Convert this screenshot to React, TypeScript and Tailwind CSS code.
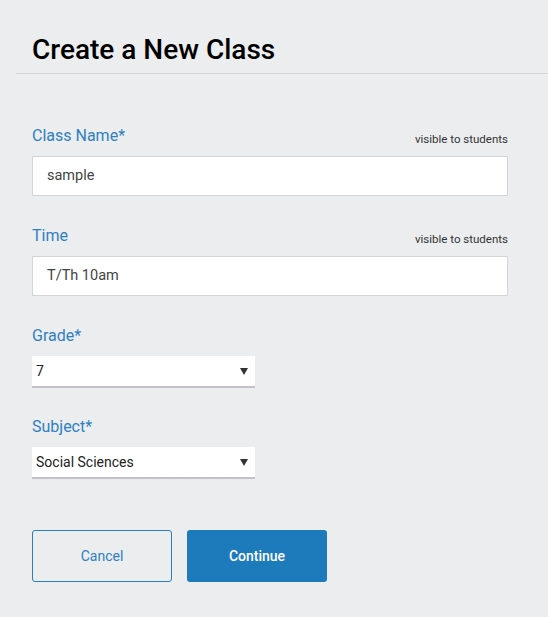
import React from "react";

function Caret() {
  return (
    <svg width="8" height="7" viewBox="0 0 8 7" className="shrink-0">
      <path d="M0 0 L8 0 L4 7 Z" fill="#333" />
    </svg>
  );
}

export default function App() {
  return (
    <div className="min-h-[617px] w-[548px] bg-[#ecedef] font-['Roboto',sans-serif]">
      <div className="pl-4">
        <div className="border-b border-[#d5d6d8] pl-4 pt-[33px] pb-[6px]">
          <h1 className="text-[28px] leading-[34px] font-medium text-black">Create a New Class</h1>
        </div>
      </div>
      <div className="pl-8 pr-10 pt-[52px]">
        <div className="flex items-end justify-between">
          <label className="block text-[16px] leading-[20px] font-normal text-[#2f80c2]">Class Name*</label>
          <span className="text-[11.5px] leading-[14px] text-[#333]">visible to students</span>
        </div>
        <div className="mt-[10px] flex h-[40px] items-center border border-[#d3d4d6] bg-white pl-[14px] text-[14.5px] text-[#444]">sample</div>

        <div className="mt-[30px] flex items-end justify-between">
          <label className="block text-[16px] leading-[20px] font-normal text-[#2f80c2]">Time</label>
          <span className="text-[11.5px] leading-[14px] text-[#333]">visible to students</span>
        </div>
        <div className="mt-[10px] flex h-[40px] items-center border border-[#d3d4d6] bg-white pl-[14px] text-[14.5px] text-[#444]">T/Th 10am</div>

        <label className="mt-[30px] block text-[16px] leading-[20px] font-normal text-[#2f80c2]">Grade*</label>
        <div className="mt-[10px] flex h-[30px] w-[223px] items-center justify-between bg-white pl-[4px] pr-[7px] text-[14px] text-[#222] shadow-[0_2px_0_#c5c1c8]">
          <span>7</span>
          <Caret />
        </div>

        <label className="mt-[31px] block text-[16px] leading-[20px] font-normal text-[#2f80c2]">Subject*</label>
        <div className="mt-[10px] flex h-[30px] w-[223px] items-center justify-between bg-white pl-[4px] pr-[7px] text-[14px] text-[#222] shadow-[0_2px_0_#c5c1c8]">
          <span>Social Sciences</span>
          <Caret />
        </div>

        <div className="mt-[53px] flex gap-[15px]">
          <button className="flex h-[52px] w-[140px] items-center justify-center rounded-[3px] border border-[#2a7dbf] bg-transparent text-[14px] text-[#2f80c2]">Cancel</button>
          <button className="flex h-[52px] w-[140px] items-center justify-center rounded-[3px] bg-[#1e7bbb] text-[14px] font-medium text-white">Continue</button>
        </div>
      </div>
    </div>
  );
}
